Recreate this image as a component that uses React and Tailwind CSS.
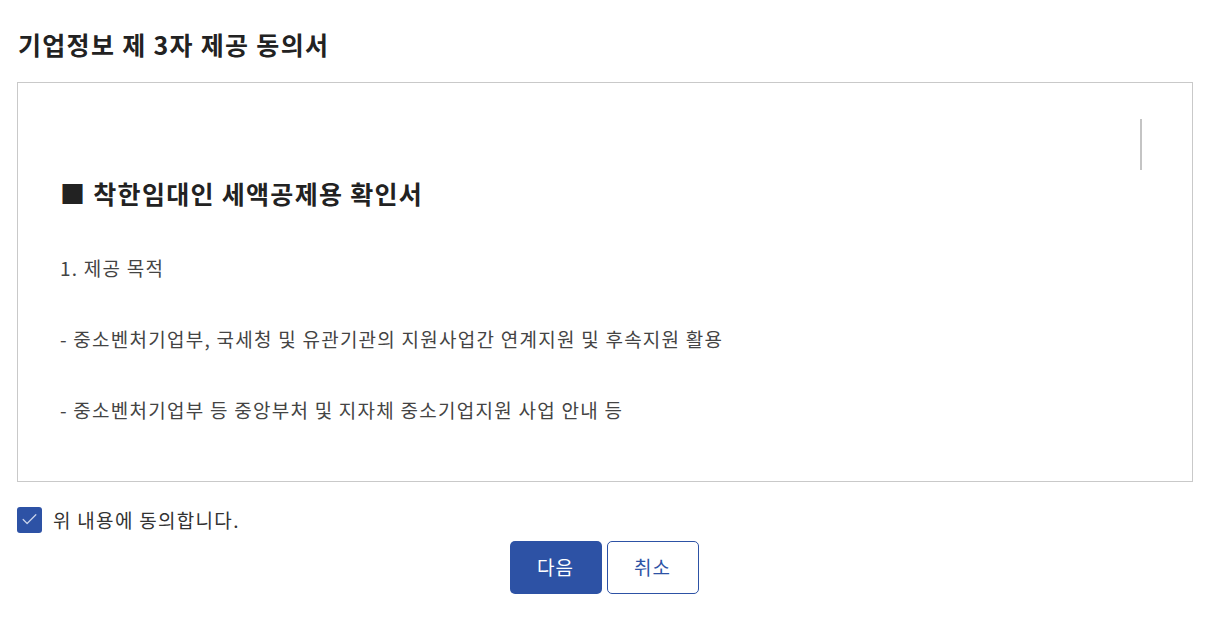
import React, { useState } from 'react';
import { Check } from 'lucide-react';

const font = { fontFamily: '"Noto Sans CJK KR", "Noto Sans", sans-serif' };

const lines = [
    '1. 제공 목적',
    '- 중소벤처기업부, 국세청 및 유관기관의 지원사업간 연계지원 및 후속지원 활용',
    '- 중소벤처기업부 등 중앙부처 및 지자체 중소기업지원 사업 안내 등',
];

export default function App() {
    const [agreed, setAgreed] = useState(true);

    return (
        <div className="min-h-screen bg-white pl-[17px] pr-[19px] pt-[24px]" style={font}>
            {/* title */}
            <h1 className="text-[25px] leading-[40px] font-bold text-[#222] tracking-[1.3px] pl-[1px]">기업정보 제 3자 제공 동의서</h1>

            {/* terms box */}
            <div className="relative mt-[18px] h-[400px] border border-[#c9c9c9] overflow-hidden">
                <div className="absolute right-[50px] top-[36px] w-[2px] h-[51px] bg-[#c4c4c4]" />
                <div className="pl-[42px] pt-[92px]">
                    <h2 className="text-[25px] leading-[36px] font-bold text-[#222] tracking-[1.3px]">■ 착한임대인 세액공제용 확인서</h2>
                    <div className="mt-[43px] flex flex-col gap-[44px]">
                        {lines.map((t) => (
                            <p key={t} className="text-[19px] leading-[27px] text-[#444] tracking-[1.25px]">{t}</p>
                        ))}
                    </div>
                </div>
            </div>

            {/* agree */}
            <label className="mt-[24px] flex items-center gap-[11px] cursor-pointer">
                <button
                    onClick={() => setAgreed(!agreed)}
                    className={`w-[25px] h-[26px] rounded-[3px] flex items-center justify-center ${agreed ? 'bg-[#2d52a5]' : 'bg-white border border-[#999]'}`}
                >
                    {agreed && <Check size={19} strokeWidth={1.6} className="text-[#c9d3ea]" />}
                </button>
                <span className="text-[19px] leading-[27px] text-[#333] tracking-[1.3px]">위 내용에 동의합니다.</span>
            </label>

            {/* actions */}
            <div className="mt-[8px] flex justify-center gap-[5px] pr-[2px]">
                <button className="w-[92px] h-[53px] rounded-[5px] bg-[#2d52a5] text-white text-[19px] tracking-[1px]">다음</button>
                <button className="w-[92px] h-[53px] rounded-[5px] border border-[#2d52a5] bg-white text-[#2d52a5] text-[19px] tracking-[1px]">취소</button>
            </div>
        </div>
    );
}
